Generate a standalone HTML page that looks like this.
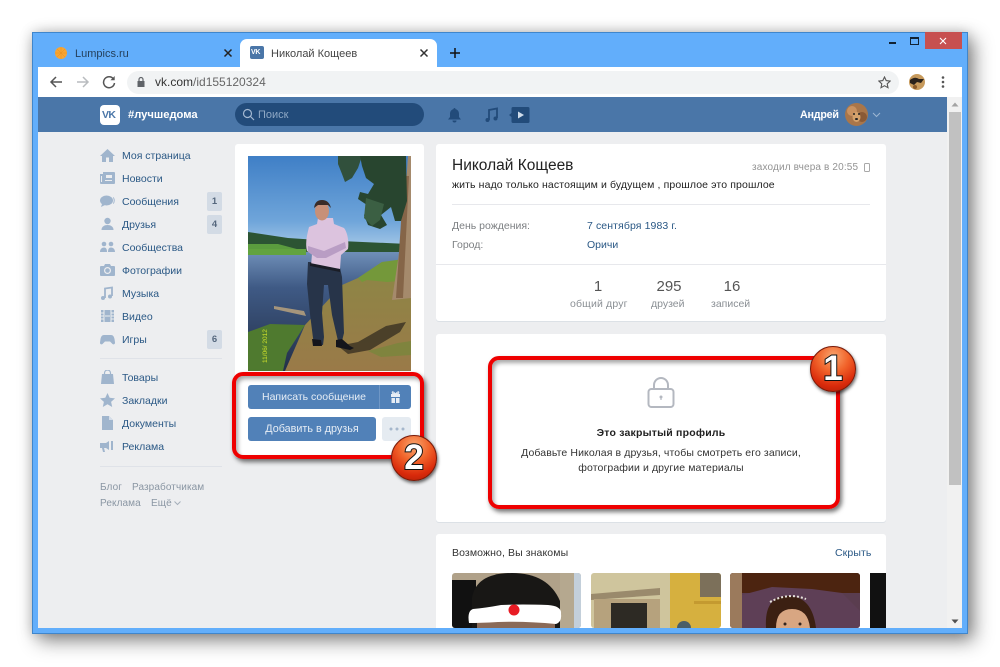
<!DOCTYPE html>
<html lang="ru"><head><meta charset="utf-8"><title>Николай Кощеев</title>
<style>
*{box-sizing:border-box}
html,body{margin:0;padding:0;width:1000px;height:667px;overflow:hidden;background:#fff;font-family:"Liberation Sans",sans-serif}
.a{position:absolute}
.t{position:absolute;white-space:nowrap;line-height:14px;margin-top:1px}
.m{font-size:10.5px;color:#2a5885;left:122px}
.ic{position:absolute;left:100px}
.bd{position:absolute;left:207px;width:15px;height:19px;background:#d3dbe5;border-radius:2px;color:#55677d;font-size:9.5px;font-weight:bold;text-align:center;line-height:19px}
.card{position:absolute;background:#fff;border-radius:3px;box-shadow:0 1px 0 #dce1e6}
.btn{position:absolute;background:#5181b8;color:#e6edf5;font-size:10.8px;text-align:center;border-radius:3px;line-height:24px}
.red{position:absolute;border:4.5px solid #ee0000;border-radius:11px;box-shadow:2px 3px 5px rgba(0,0,0,.55),inset 2px 3px 4px rgba(0,0,0,.35)}
.badge{position:absolute;width:46px;height:46px;border-radius:50%;background:radial-gradient(circle at 50% 22%,#f9a66f 0,#f1632a 38%,#d92a0b 72%,#a81d05 100%);box-shadow:1px 2px 3px rgba(0,0,0,.6);border:1px solid #7a1a08;color:#fff;font-weight:bold;font-size:35px;line-height:44px;text-align:center;-webkit-text-stroke:2px #111;paint-order:stroke fill}
</style></head><body>
<!-- window -->
<div class="a" style="left:32px;top:32px;width:936px;height:602px;background:#62aefb;border:1px solid #3f86cc;box-shadow:6px 7px 18px rgba(0,0,0,.45),0 0 12px rgba(0,0,0,.18)"></div>
<!-- tabs -->
<div class="a" style="left:240px;top:39px;width:197px;height:29px;background:#fff;border-radius:7px 7px 0 0"></div>
<svg class="a" style="left:54px;top:46px" width="14" height="14"><circle cx="7" cy="7" r="6" fill="#f7a533"/><path d="M7 1v12M1 7h12M3 3l8 8M11 3l-8 8" stroke="#e88f1e" stroke-width=".5"/></svg>
<div class="t" style="left:75px;top:46px;font-size:11px;color:#24405c">Lumpics.ru</div>
<svg class="a" style="left:223px;top:48px" width="10" height="10"><path d="M1.5 1.5l7 7M8.500 1.500l-7 7" stroke="#222" stroke-width="1.500"/></svg>
<div class="a" style="left:250px;top:46px;width:14px;height:13px;background:#4a76a8;border-radius:2px"></div>
<div class="t" style="left:251px;top:45px;font-size:7px;font-weight:bold;color:#fff;letter-spacing:-.3px">VK</div>
<div class="t" style="left:271px;top:46px;font-size:11px;color:#444">Николай Кощеев</div>
<svg class="a" style="left:419px;top:48px" width="10" height="10"><path d="M1.500 1.500l7 7M8.500 1.500l-7 7" stroke="#333" stroke-width="1.500"/></svg>
<svg class="a" style="left:449px;top:47px" width="12" height="12"><path d="M6 1v10M1 6h10" stroke="#111" stroke-width="1.500"/></svg>
<!-- window controls -->
<div class="a" style="left:889px;top:42px;width:7px;height:2px;background:#123"></div>
<div class="a" style="left:910px;top:37px;width:9px;height:8px;border:1px solid #123;border-top-width:2px"></div>
<div class="a" style="left:925px;top:32px;width:37px;height:17px;background:#c75050"></div>
<svg class="a" style="left:939px;top:37px" width="8" height="8"><path d="M1 1l6 6M7 1l-6 6" stroke="#fff" stroke-width="1.100"/></svg>
<!-- toolbar -->
<div class="a" style="left:38px;top:67px;width:924px;height:30px;background:#fff"></div>
<div class="a" style="left:127px;top:71px;width:772px;height:23px;background:#f1f3f4;border-radius:12px"></div>
<svg class="a" style="left:49px;top:75px" width="14" height="14" fill="none" stroke="#555" stroke-width="1.500"><path d="M13 7H2M7 2L2 7l5 5"/></svg>
<svg class="a" style="left:76px;top:75px" width="14" height="14" fill="none" stroke="#b9bcbf" stroke-width="1.500"><path d="M1 7h11M7 2l5 5-5 5"/></svg>
<svg class="a" style="left:102px;top:75px" width="14" height="14" fill="none" stroke="#555" stroke-width="1.500"><path d="M11.500 4A5.500 5.500 0 1 0 12.500 8"/><path d="M12.700 1v4.300H8.400z" fill="#555" stroke="none"/></svg>
<svg class="a" style="left:136px;top:76px" width="10" height="12"><rect x="1.500" y="5" width="7" height="6" fill="#5f6368"/><path d="M3 5V3.500a2 2 0 0 1 4 0V5" fill="none" stroke="#5f6368" stroke-width="1.200"/></svg>
<div class="t" style="left:155px;top:74px;font-size:12px;color:#333">vk.com<span style="color:#666">/id155120324</span></div>
<svg class="a" style="left:878px;top:76px" width="13" height="13" fill="none" stroke="#555" stroke-width="1.100"><path d="M6.500 1l1.700 3.600 3.900.5-2.900 2.700.8 3.900-3.500-2-3.500 2 .8-3.900L.9 5.100l3.900-.5z"/></svg>
<svg class="a" style="left:909px;top:74px" width="16" height="16"><circle cx="8" cy="8" r="8" fill="#c79a5c"/><path d="M1 6q5-4 9-1l5 0-3 4-4-1-3 3-4-2z" fill="#2a221c"/><circle cx="6" cy="13" r="2" fill="#8a5a2a"/></svg>
<svg class="a" style="left:941px;top:75px" width="4" height="14" fill="#555"><circle cx="2" cy="2.500" r="1.300"/><circle cx="2" cy="7" r="1.300"/><circle cx="2" cy="11.500" r="1.300"/></svg>
<!-- page -->
<div class="a" style="left:38px;top:97px;width:909px;height:531px;background:#edeef0"></div>
<!-- scrollbar -->
<div class="a" style="left:947px;top:97px;width:15px;height:531px;background:#f1f1f1"></div>
<div class="a" style="left:949px;top:112px;width:12px;height:373px;background:#c1c1c1"></div>
<svg class="a" style="left:951px;top:102px" width="8" height="5"><path d="M4 0.500L7.500 4.500H.5z" fill="#a3a3a3"/></svg>
<svg class="a" style="left:951px;top:619px" width="8" height="5"><path d="M4 4.500L7.500 .5H.5z" fill="#505050"/></svg>
<!-- vk header -->
<div class="a" style="left:38px;top:97px;width:909px;height:35px;background:#4a76a8"></div>
<div class="a" style="left:100px;top:105px;width:20px;height:20px;background:#fff;border-radius:4px"></div>
<div class="t" style="left:102px;top:107px;font-size:10.500px;font-weight:bold;color:#4a76a8;letter-spacing:-.6px">VK</div>
<div class="t" style="left:128px;top:107px;font-size:11.200px;font-weight:bold;color:#fff">#лучшедома</div>
<div class="a" style="left:235px;top:103px;width:189px;height:23px;background:#224b7a;border-radius:12px"></div>
<svg class="a" style="left:242px;top:108px" width="13" height="13" fill="none" stroke="#a4b9d2" stroke-width="1.200"><circle cx="5.500" cy="5.500" r="4"/><path d="M8.500 8.500l3.500 3.500"/></svg>
<div class="t" style="left:258px;top:107px;font-size:11px;color:#8fa8c5">Поиск</div>
<svg class="a" style="left:447px;top:107px" width="15" height="16" fill="#224b7a"><path d="M7.500 1a1 1 0 0 1 1 1.100C11 2.700 12 4.700 12 7v3l2 2.500H1L3 10V7c0-2.300 1-4.300 3.500-4.900A1 1 0 0 1 7.500 1z"/><path d="M5.500 13.500h4a2 2 0 0 1-4 0z"/></svg>
<svg class="a" style="left:484px;top:107px" width="15" height="16" fill="none" stroke="#224b7a" stroke-width="1.800"><path d="M5 13V3l8-1.500V11"/><circle cx="3.500" cy="13" r="2" fill="#224b7a" stroke="none"/><circle cx="11.500" cy="11.500" r="2" fill="#224b7a" stroke="none"/></svg>
<svg class="a" style="left:508px;top:106px" width="22" height="18"><path d="M5 1h15a1.500 1.500 0 0 1 1.500 1.500v13A1.500 1.500 0 0 1 20 17H5a1.500 1.500 0 0 1-1.500-1.500V11L1 9l2.500-2V2.500A1.500 1.500 0 0 1 5 1z" fill="#224b7a"/><path d="M10 5.500l6 3.500-6 3.500z" fill="#cfdceb"/></svg>
<div class="t" style="left:800px;top:107px;font-size:10.700px;font-weight:bold;color:#fff;letter-spacing:-.2px">Андрей</div>
<svg class="a" style="left:845px;top:103px" width="23" height="23"><circle cx="11.500" cy="11.500" r="11.500" fill="#a9764a"/><circle cx="7" cy="8" r="5" fill="#c99260"/><circle cx="17" cy="14" r="5" fill="#8a5a36"/><ellipse cx="11.500" cy="14" rx="4" ry="5" fill="#d4a26c"/><circle cx="9" cy="11" r="1" fill="#222"/><circle cx="14" cy="11" r="1" fill="#222"/><ellipse cx="11.500" cy="16" rx="1.500" ry="1" fill="#222"/></svg>
<svg class="a" style="left:872px;top:112px" width="9" height="6" fill="none" stroke="#9db6d3" stroke-width="1"><path d="M1 1l3.500 3.500L8 1"/></svg>
<!-- left menu icons -->
<svg class="ic" style="top:148px" width="15" height="14" fill="#a0b5cd"><path d="M7.500 1L15 8h-2v6H9V9.500H6V14H2V8H0z"/></svg>
<svg class="ic" style="top:171px" width="15" height="14" fill="#a0b5cd"><path d="M0 3h3V1h11a1 1 0 0 1 1 1v10a1 1 0 0 1-1 1H1a1 1 0 0 1-1-1z"/><path d="M6 4h6v3H6zM5 9h7v1H5zM1 5h1v6H1z" fill="#edeef0"/></svg>
<svg class="ic" style="top:194px" width="15" height="14" fill="#a0b5cd"><ellipse cx="6.500" cy="6.500" rx="6.500" ry="5"/><path d="M2 10l-1 3 4-2zM13.500 3q2.500 3.500 0 7l-.5-.5q1.500-3 0-6z"/></svg>
<svg class="ic" style="top:217px" width="15" height="14" fill="#a0b5cd"><circle cx="7.500" cy="4" r="3.200"/><path d="M1.500 13c0-3.500 3-5 6-5s6 1.500 6 5z"/></svg>
<svg class="ic" style="top:240px" width="15" height="14" fill="#a0b5cd"><circle cx="4" cy="4" r="2.300"/><circle cx="11" cy="4" r="2.300"/><path d="M0 12c0-3 2-4.500 4-4.500S7 9 7 12zM8 12c0-3 1-4.500 3-4.500s4 1.500 4 4.500z"/></svg>
<svg class="ic" style="top:263px" width="15" height="14" fill="#a0b5cd"><path d="M1 3h3l1-2h5l1 2h3a1 1 0 0 1 1 1v8a1 1 0 0 1-1 1H1a1 1 0 0 1-1-1V4a1 1 0 0 1 1-1z"/><circle cx="7.500" cy="7.500" r="3.500" fill="#edeef0"/><circle cx="7.500" cy="7.500" r="2.300"/></svg>
<svg class="ic" style="top:286px" width="15" height="14" fill="none" stroke="#a0b5cd" stroke-width="1.800"><path d="M5 12V2.500l7-1V10"/><circle cx="3" cy="12" r="2" fill="#a0b5cd" stroke="none"/><circle cx="10" cy="10.500" r="2" fill="#a0b5cd" stroke="none"/></svg>
<svg class="ic" style="top:309px" width="15" height="14" fill="#a0b5cd"><path d="M1 1h13v12H1z"/><path d="M4 1v12M11 1v12M1 4h3M1 7h3M1 10h3M11 4h3M11 7h3M11 10h3M5 7h5" stroke="#edeef0" stroke-width="1"/></svg>
<svg class="ic" style="top:332px" width="15" height="14" fill="#a0b5cd"><path d="M4 3h7c2 0 3 1.500 3.500 4l.5 3.500c.2 2-2 2.500-3 1L10 9.500H5L3 11.500c-1 1.500-3.200 1-3-1L.5 7C1 4.500 2 3 4 3z"/></svg>
<svg class="ic" style="top:370px" width="15" height="14" fill="#a0b5cd"><path d="M2 4h11l1 10H1z"/><path d="M4.500 5V3a3 3 0 0 1 6 0v2" fill="none" stroke="#a0b5cd" stroke-width="1.200"/></svg>
<svg class="ic" style="top:393px" width="15" height="14" fill="#a0b5cd"><path d="M7.500 0l2.200 4.800 5.300.6-3.900 3.500 1.100 5.100-4.700-2.700-4.700 2.700 1.100-5.100L0 5.400l5.300-.6z"/></svg>
<svg class="ic" style="top:416px" width="15" height="14" fill="#a0b5cd"><path d="M2 0h7l4 4v10H2z"/><path d="M9 0v4h4z" fill="#d5deea"/></svg>
<svg class="ic" style="top:439px" width="15" height="14" fill="#a0b5cd"><path d="M0 4h6l3-2v9L6 9H4l1 4H3L2 9H0zM11 2h2v9h-2z"/></svg>
<div class="t m" style="top:148px">Моя страница</div>
<div class="t m" style="top:171px">Новости</div>
<div class="t m" style="top:194px">Сообщения</div>
<div class="t m" style="top:217px">Друзья</div>
<div class="t m" style="top:240px">Сообщества</div>
<div class="t m" style="top:263px">Фотографии</div>
<div class="t m" style="top:286px">Музыка</div>
<div class="t m" style="top:309px">Видео</div>
<div class="t m" style="top:332px">Игры</div>
<div class="bd" style="top:192px">1</div>
<div class="bd" style="top:215px">4</div>
<div class="bd" style="top:330px">6</div>
<div class="a" style="left:100px;top:358px;width:122px;height:1px;background:#dfe2e8"></div>
<div class="t m" style="top:370px">Товары</div>
<div class="t m" style="top:393px">Закладки</div>
<div class="t m" style="top:416px">Документы</div>
<div class="t m" style="top:439px">Реклама</div>
<div class="a" style="left:100px;top:466px;width:122px;height:1px;background:#dfe2e8"></div>
<div class="t" style="left:100px;top:480px;font-size:10px;color:#8a96a3;letter-spacing:.1px">Блог</div>
<div class="t" style="left:132px;top:480px;font-size:10px;color:#8a96a3;letter-spacing:.1px">Разработчикам</div>
<div class="t" style="left:100px;top:496px;font-size:10px;color:#8a96a3;letter-spacing:.1px">Реклама</div>
<div class="t" style="left:151px;top:496px;font-size:10px;color:#8a96a3;letter-spacing:.1px">Ещё</div>
<svg class="a" style="left:174px;top:501px" width="7" height="5" fill="none" stroke="#a5afba"><path d="M.5.5l3 3 3-3"/></svg>
<!-- photo card -->
<div class="card" style="left:235px;top:144px;width:189px;height:314px"></div>
<svg class="a" style="left:248px;top:156px" width="163" height="215" viewBox="0 0 163 215">
<defs><linearGradient id="sky" x1="0" y1="0" x2="0" y2="1"><stop offset="0" stop-color="#3f7fc6"/><stop offset=".65" stop-color="#6fa5da"/><stop offset="1" stop-color="#b5d2ea"/></linearGradient>
<linearGradient id="wat" x1="0" y1="0" x2="0" y2="1"><stop offset="0" stop-color="#6f8fb8"/><stop offset=".3" stop-color="#3f5a85"/><stop offset="1" stop-color="#232f48"/></linearGradient>
<linearGradient id="gr" x1="0" y1="0" x2="0" y2="1"><stop offset="0" stop-color="#8c8745"/><stop offset="1" stop-color="#9a7a48"/></linearGradient></defs>
<rect width="163" height="100" fill="url(#sky)"/>
<path d="M0 76l40 6 30 2 90 4v8H0z" fill="#2c5433"/>
<path d="M0 88l30 0 30 8H0z" fill="#5b9c3e"/>
<rect y="96" width="163" height="119" fill="url(#wat)"/>
<path d="M0 93h58v6H0z" fill="#62a33f"/>
<!-- ground -->
<path d="M37 215L57 169 94 129 110 122 134 106 163 105V215z" fill="url(#gr)"/>
<path d="M0 176l22-8 35 1-18 28-4 18H0z" fill="#4f7a2f"/>
<path d="M110 122l24-16 29-4v22l-24 2-20-2-5 2z" fill="#74983a"/>
<path d="M26 150l30 5 2 5-32-7z" fill="#a5957c"/>
<path d="M90 190l20-4 28-16 20-4-6 10-30 18-22 4z" fill="#3e3525" opacity=".85"/>
<path d="M120 195l30-8 13-2v14l-30 2z" fill="#79863c" opacity=".8"/>
<!-- tree -->
<path d="M160 0h3v142l-19 2 3-20 6-40 4-40z" fill="#a58a6c"/>
<path d="M156 20l5 0-6 122-7 0z" fill="#856548"/>
<path d="M90 0h24l-4 12-6 10-7 4-3-8-4-10z" fill="#31503c"/>
<path d="M112 0h46l1 45-6 20-6 0-4-14-10 8 6 10-7 4-12-4-4-10 6-8-12-8 2-7 8 2 6-10-8-6-4-12z" fill="#28452f"/>
<path d="M118 42l18 6-4 16-8 6-8-8z" fill="#3b5f43"/>
<!-- man -->
<path d="M60 106l-1 22 3 30 3 24 1 6 9 1 1-8-2-24 2-28 4 0 4 30 6 26 4 0 2-8-1-28-1-28-3-14z" fill="#273449"/>
<path d="M70 62l-1 6-8 3c-2 8-4 16-2 24l5 3-1 12 29 3 1-14 7-6c1-6 0-16-4-21l-10-4-1-6z" fill="#dcc3de"/>
<path d="M60 90l16 5 21-9 1 6-20 10-9 0-9-6z" fill="#b99dc4"/>
<ellipse cx="74" cy="55" rx="7" ry="9.500" fill="#c79078"/>
<path d="M66 52q1-8 8-8t9 8l-3-3h-10z" fill="#3a2c28"/>
<path d="M62 107l30 6 0 3-30-6z" fill="#1a1d26"/>
<path d="M64 183l9 1 1 6h-9z" fill="#14151b"/>
<path d="M88 184l6-1 8 7 4 2-4 2-14-3z" fill="#14151b"/>
<text transform="translate(19,207) rotate(-90)" font-size="6.500" fill="#cde02a" font-family="Liberation Sans">11/06/ 2012</text>
</svg>
<!-- buttons -->
<div class="btn" style="left:248px;top:385px;width:163px;height:24px;text-align:left;padding-left:14px;font-size:10.500px">Написать сообщение</div>
<div class="a" style="left:379px;top:385px;width:1px;height:24px;background:#6f97c6"></div>
<svg class="a" style="left:390px;top:391px" width="11" height="12" fill="#e6edf5"><path d="M1 3h9v3H1zM1.500 7H5v5H1.500zM6 7h3.500v5H6z"/><path d="M5.500 3C4 1 2 0 2.200 1.500S4 3 5.500 3zm0 0C7 1 9 0 8.800 1.500S7 3 5.500 3z" fill="none" stroke="#e6edf5"/></svg>
<div class="btn" style="left:248px;top:417px;width:128px;height:24px">Добавить в друзья</div>
<div class="a" style="left:382px;top:417px;width:29px;height:24px;background:#e5ebf1;border-radius:3px"></div>
<svg class="a" style="left:389px;top:427px" width="16" height="4" fill="#a5b7cc"><circle cx="2" cy="2" r="1.500"/><circle cx="8" cy="2" r="1.500"/><circle cx="14" cy="2" r="1.500"/></svg>
<!-- info card -->
<div class="card" style="left:436px;top:144px;width:450px;height:177px"></div>
<div class="t" style="left:452px;top:156px;font-size:15.500px;line-height:18px;color:#222">Николай Кощеев</div>
<div class="t" style="left:752px;top:160px;font-size:10px;color:#939393;letter-spacing:.15px">заходил вчера в 20:55</div>
<svg class="a" style="left:864px;top:163px" width="6" height="9" fill="none" stroke="#a8a8a8"><rect x=".5" y=".5" width="5" height="8" rx="1"/></svg>
<div class="t" style="left:452px;top:177px;font-size:10.500px;color:#222;letter-spacing:.12px">жить надо только настоящим и будущем , прошлое это прошлое</div>
<div class="a" style="left:452px;top:204px;width:418px;height:1px;background:#e7e8ec"></div>
<div class="t" style="left:452px;top:218px;font-size:10.500px;color:#7c7f82">День рождения:</div>
<div class="t" style="left:587px;top:218px;font-size:10.500px;color:#2a5885;letter-spacing:.1px">7 сентября 1983 г.</div>
<div class="t" style="left:452px;top:237px;font-size:10.500px;color:#7c7f82">Город:</div>
<div class="t" style="left:587px;top:237px;font-size:10.500px;color:#2a5885">Оричи</div>
<div class="a" style="left:436px;top:264px;width:450px;height:1px;background:#e7e8ec"></div>
<div class="t" style="left:578px;top:277px;width:40px;text-align:center;font-size:15px;line-height:18px;color:#555">1</div>
<div class="t" style="left:644px;top:277px;width:50px;text-align:center;font-size:15px;line-height:18px;color:#555">295</div>
<div class="t" style="left:712px;top:277px;width:40px;text-align:center;font-size:15px;line-height:18px;color:#555">16</div>
<div class="t" style="left:570px;top:296px;font-size:10.500px;color:#8a8f94;letter-spacing:.15px">общий друг</div>
<div class="t" style="left:651px;top:296px;font-size:10.500px;color:#8a8f94">друзей</div>
<div class="t" style="left:711px;top:296px;font-size:10.500px;color:#8a8f94">записей</div>
<!-- private card -->
<div class="card" style="left:436px;top:334px;width:450px;height:188px"></div>
<svg class="a" style="left:646px;top:376px" width="30" height="33" fill="none" stroke="#b4b8c0" stroke-width="2"><rect x="2.500" y="13" width="25" height="18" rx="3"/><path d="M8 13V9a7 7 0 0 1 14 0v4"/><circle cx="15" cy="21" r="1.500" fill="#b4b8c0" stroke="none"/><path d="M15 21v3" stroke-width="1.200"/></svg>
<div class="t" style="left:436px;top:425px;width:450px;text-align:center;font-size:10.500px;font-weight:bold;color:#222;letter-spacing:.2px">Это закрытый профиль</div>
<div class="t" style="left:436px;top:445px;width:450px;text-align:center;font-size:10.500px;color:#333;letter-spacing:.1px">Добавьте Николая в друзья, чтобы смотреть его записи,</div>
<div class="t" style="left:436px;top:460px;width:450px;text-align:center;font-size:10.500px;color:#333;letter-spacing:.1px">фотографии и другие материалы</div>
<!-- friends card -->
<div class="a" style="left:436px;top:534px;width:450px;height:94px;background:#fff;border-radius:3px 3px 0 0"></div>
<div class="t" style="left:452px;top:545px;font-size:10.500px;color:#333;letter-spacing:.1px">Возможно, Вы знакомы</div>
<div class="t" style="left:835px;top:545px;font-size:10.500px;color:#2a5885;letter-spacing:.1px">Скрыть</div>
<svg class="a" style="left:452px;top:573px" width="434" height="55" viewBox="0 0 434 55">
<clipPath id="c1"><rect width="129" height="55" rx="3"/></clipPath>
<clipPath id="c2"><rect x="139" width="130" height="55" rx="3"/></clipPath>
<clipPath id="c3"><rect x="278" width="130" height="55" rx="3"/></clipPath>
<g clip-path="url(#c1)"><rect width="129" height="55" fill="#b0a189"/><rect x="122" width="7" height="55" fill="#c3cfda"/><path d="M108 0h14v55h-14z" fill="#b5a88f"/><rect y="7" width="24" height="48" fill="#111"/><path d="M20 55V25Q24 0 60 0T108 28V55z" fill="#181715"/><path d="M25 48h78v7H25z" fill="#8a6a58"/><path d="M17 50Q15 38 21 36q12-1 28-4 20-1 47 0 14 1 13 9 1 8-5 10-30-3-58-2-18 1-29 1z" fill="#fff"/><circle cx="62" cy="37" r="5.500" fill="#e81b24"/></g>
<g clip-path="url(#c2)"><rect x="139" width="130" height="55" fill="#cfc59d"/><rect x="218" width="51" height="55" fill="#d6b03f"/><rect x="248" width="21" height="24" fill="#7c705a"/><path d="M242 28h27v3h-27z" fill="#c49a30"/><path d="M139 21l69-6v7l-69 5z" fill="#9a8a6c"/><rect x="142" y="26" width="66" height="29" fill="#b6a27d"/><rect x="159" y="30" width="36" height="25" fill="#2d2a24"/><ellipse cx="232" cy="55" rx="7" ry="7" fill="#4a5f68"/></g>
<g clip-path="url(#c3)"><rect x="278" width="130" height="55" fill="#5a3d4f"/><rect x="278" width="130" height="20" fill="#4c2410"/><rect x="278" width="12" height="55" fill="#9b7a5c"/><path d="M290 22l30-8 40 2 30 4 18 18v17H290z" fill="#5e3f56"/><path d="M314 55q-2-32 22-32 24 0 28 32z" fill="#3c2012"/><path d="M324 55q0-19 16-19t18 19z" fill="#d8a682"/><path d="M318 29q18-10 36-3" fill="none" stroke="#e8e4dc" stroke-width="2" stroke-dasharray="2 2"/><circle cx="333" cy="51" r="1.500" fill="#32241e"/><circle cx="348" cy="51" r="1.500" fill="#32241e"/></g>
<rect x="418" width="16" height="55" fill="#111"/>
</svg>
<!-- annotations -->
<div class="red" style="left:232px;top:372px;width:192px;height:87px"></div>
<div class="red" style="left:488px;top:356px;width:352px;height:153px"></div>
<div class="badge" style="left:810px;top:346px">1</div>
<div class="badge" style="left:391px;top:435px">2</div>
</body></html>
